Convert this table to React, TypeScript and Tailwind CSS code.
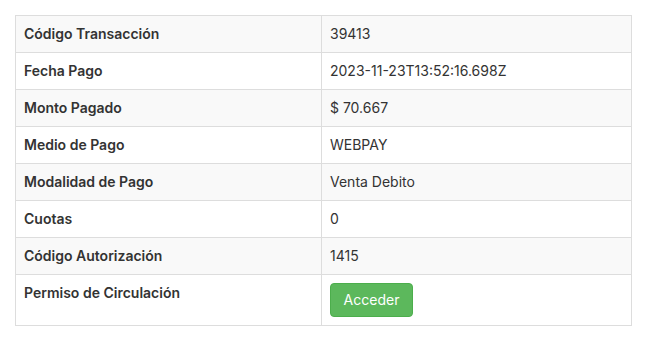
import React from 'react';

type Row = { label: string; value: React.ReactNode };

const rows: Row[] = [
  { label: 'Código Transacción', value: '39413' },
  { label: 'Fecha Pago', value: '2023-11-23T13:52:16.698Z' },
  { label: 'Monto Pagado', value: '$ 70.667' },
  { label: 'Medio de Pago', value: 'WEBPAY' },
  { label: 'Modalidad de Pago', value: 'Venta Debito' },
  { label: 'Cuotas', value: '0' },
  { label: 'Código Autorización', value: '1415' },
];

export default function App() {
  return (
    <div className="min-h-[345px] bg-white pl-[15px] pt-[15px] text-[14px] leading-[20px] text-[#333]" style={{ fontFamily: 'Inter, "Noto Sans", sans-serif' }}>
      <table className="w-[617px] border-collapse border border-[#ddd]">
        <tbody>
          {rows.map((r, i) => (
            <tr key={r.label} className={i % 2 === 0 ? 'bg-[#f9f9f9]' : 'bg-white'}>
              <th className="w-[306px] border border-[#ddd] p-2 text-left align-top font-semibold">{r.label}</th>
              <td className="border border-[#ddd] p-2 align-top">{r.value}</td>
            </tr>
          ))}
          <tr className="bg-white">
            <th className="w-[306px] border border-[#ddd] p-2 text-left align-top font-semibold">Permiso de Circulación</th>
            <td className="border border-[#ddd] p-2 align-top">
              <button className="h-[34px] w-[83px] rounded-[4px] border border-[#4cae4c] bg-[#5cb85c] text-[14px] text-white">
                Acceder
              </button>
            </td>
          </tr>
        </tbody>
      </table>
    </div>
  );
}
